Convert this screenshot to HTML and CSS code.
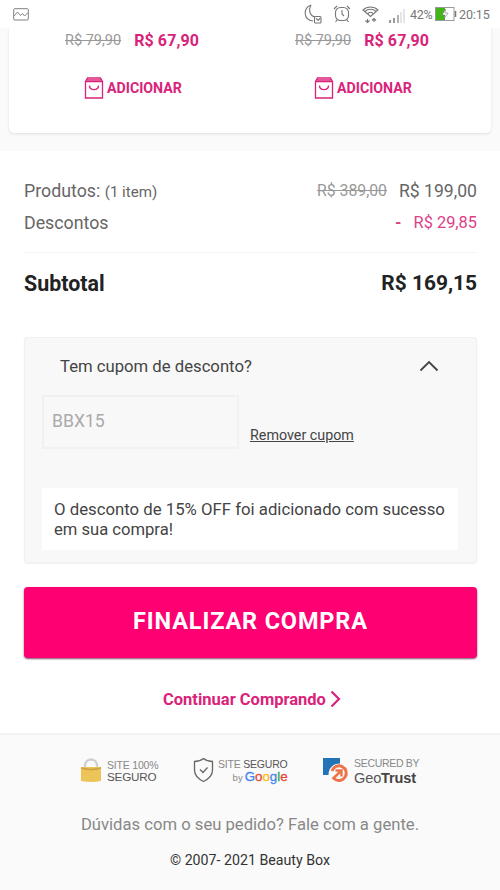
FILE: index.html
```html
<!DOCTYPE html>
<html lang="pt-BR">
<head>
<meta charset="utf-8">
<title>Beauty Box</title>
<link rel="stylesheet" href="styles.css">
</head>
<body>
<header class="status">
  <svg class="status-photo" width="16" height="13" viewBox="0 0 16 13" fill="none" stroke="#808080"><rect x=".7" y=".7" width="14.6" height="11.3" rx="1"/><path d="M1 8l3.500-4 3 3.500 2-2 2 2.500 3.500-3.500"/></svg>
  <svg class="status-icons" width="102" height="22" viewBox="0 0 102 22" fill="none" stroke="#777" stroke-width="1.100">
    <path d="M8 2C0 5 0 17 10 18M8 2C5 7 7 13 12 14"/><rect x="11.500" y="13.500" width="6.500" height="6.500" rx="1"/><path d="M13 15.500l2.500 2M17 15l-1.500 2.500"/>
    <rect x="32.500" y="4.500" width="13" height="13" rx="5"/><path d="M31 6l3-3M47 6l-3-3M34.500 16.500l-2 2.500M43.500 16.500l2 2.500M39 7v4l2 2"/>
    <path d="M60 7c4-4 11-4 15 0l-7.500 6.500zM62 8.500c3-3 8-3 11 0M65 10.500c1.500-1.500 3.500-1.500 5 0"/><path d="M64.500 16v3.500M62.500 17.500l2 2 2-2M71 19v-3.500M69 17.500l2-2 2 2"/>
    <path d="M87 20v-3M91 20v-5" stroke-width="1.500"/><path d="M95 20v-8" stroke="#999" stroke-width="1.500"/><path d="M98 20V9M101 20V6" stroke="#ddd" stroke-width="1.500"/>
  </svg>
  <span class="battery-text">42%</span>
  <svg class="battery" width="22" height="14" viewBox="0 0 22 14"><rect x=".5" y=".5" width="18.500" height="13" fill="#fff" stroke="#999"/><path d="M1 1h9v12H1z" fill="#43b514"/><path d="M20.500 4v6" stroke="#777" stroke-width="1.500"/><path d="M10.500 2L7 8h3l-1 4 4-6h-3z" fill="#fff" stroke="#666" stroke-width=".5"/></svg>
  <span class="clock">20:15</span>
</header>
<section class="offers">
  <div class="offers-card">
    <div class="offer">
      <div class="offer-price"><s>R$ 79,90</s><b>R$ 67,90</b></div>
      <a class="add"><svg width="20" height="22" viewBox="0 0 20 22" fill="none" stroke="#d9237a" stroke-width="1.300"><path d="M1.500 4.500h17V21h-17zM1.500 4.500L3.500 1h13l2 3.500M3 2.800h14"/><path d="M5.500 8.500c0 5.500 9 5.500 9 0"/></svg><span>ADICIONAR</span></a>
    </div>
    <div class="offer">
      <div class="offer-price"><s>R$ 79,90</s><b>R$ 67,90</b></div>
      <a class="add"><svg width="20" height="22" viewBox="0 0 20 22" fill="none" stroke="#d9237a" stroke-width="1.300"><path d="M1.500 4.500h17V21h-17zM1.500 4.500L3.500 1h13l2 3.500M3 2.800h14"/><path d="M5.500 8.500c0 5.500 9 5.500 9 0"/></svg><span>ADICIONAR</span></a>
    </div>
  </div>
</section>
<main class="checkout">
  <div class="row products"><span>Produtos: <small>(1 item)</small></span><span class="values"><s>R$ 389,00</s><span>R$ 199,00</span></span></div>
  <div class="row discounts"><span>Descontos</span><span class="discount"><b>-</b><span>R$ 29,85</span></span></div>
  <div class="row subtotal"><span>Subtotal</span><span class="total">R$ 169,15</span></div>
  <section class="coupon">
    <div class="coupon-head"><span>Tem cupom de desconto?</span><svg width="20" height="12" viewBox="0 0 20 12" fill="none" stroke="#444" stroke-width="1.800"><path d="M1.500 10.500L10 2l8.500 8.500"/></svg></div>
    <div class="coupon-form"><div class="coupon-input">BBX15</div><a class="remove">Remover cupom</a></div>
    <p class="message"><span class="line">O desconto de 15% OFF foi adicionado com sucesso</span> <span class="line last">em sua compra!</span></p>
  </section>
  <button class="finish">FINALIZAR COMPRA</button>
  <a class="continue"><span>Continuar Comprando</span><svg width="11" height="18" viewBox="0 0 11 18" fill="none" stroke="#d9237a" stroke-width="2.200"><path d="M1.500 1.500L9 9l-7.500 7.500"/></svg></a>
</main>
<footer class="footer">
  <div class="seals">
    <div class="seal site">
      <svg width="22" height="26" viewBox="0 0 22 26"><path d="M5 12V8.500c0-8 12-8 12 0V12" fill="none" stroke="#cfcfcf" stroke-width="2.300"/><path d="M1 10h20v14q-10 2-20 0z" fill="#edc458"/><path d="M1 11q10 3 20 0" fill="none" stroke="#cfa044" stroke-width="1.600"/></svg>
      <div class="seal-text"><span>SITE 100%</span><span class="strong">SEGURO</span></div>
    </div>
    <div class="seal google">
      <svg width="21" height="26" viewBox="0 0 21 26" fill="none" stroke="#666" stroke-width="1.300"><path d="M10.500 1.500C8 3.500 5 4.500 1.500 4.500V13c0 6 4 9 9 11.500 5-2.500 9-5.500 9-11.500V4.500c-3.500 0-6.500-1-9-3z"/><path d="M7 12.500l3 3 4.500-5"/></svg>
      <div class="seal-text"><span>SITE <span class="strong">SEGURO</span></span><span class="brand"><small>by</small><b class="blue">G</b><b class="red">o</b><b class="yellow">o</b><b class="blue">g</b><b class="green">l</b><b class="red">e</b></span></div>
    </div>
    <div class="seal trust">
      <svg width="27" height="26" viewBox="0 0 27 26"><path d="M1 1h17v5.500C11 6.500 6.500 11 6.500 18H1z" fill="#2274b5"/><path d="M10 14a7.300 7.300 0 1 1 2 7.500" fill="none" stroke="#ec7448" stroke-width="3"/><path d="M10.500 22l8-7.500M13.500 13.500h6v6" fill="none" stroke="#ec7448" stroke-width="2.400"/></svg>
      <div class="seal-text"><span>SECURED BY</span><span class="geo">Geo<b>Trust</b></span></div>
    </div>
  </div>
  <p class="help">Dúvidas com o seu pedido? Fale com a gente.</p>
  <p class="copyright">© 2007- 2021 Beauty Box</p>
</footer>
</body>
</html>
```
FILE: styles.css
```css
* { box-sizing: border-box; }
body { margin: 0; width: 500px; height: 890px; overflow: hidden; background: #fff; color: #666; font-family: Roboto, sans-serif; white-space: nowrap; }
svg { display: block; flex: none; }
p { margin: 0; }
.status { display: flex; align-items: center; height: 28px; padding: 0 9px 0 13px; font-size: 12.5px; color: #777; }
.status-icons { margin-left: auto; }
.battery-text { margin-left: 5px; width: 24px; letter-spacing: -.3px; }
.battery { margin: 0 2px 0 1px; }
.clock { width: 32px; letter-spacing: -.1px; }
.offers { height: 123px; padding: 0 9px; background: #fafafa; }
.offers-card { display: flex; height: 105px; background: #fff; border-radius: 0 0 5px 5px; box-shadow: 0 1px 3px rgba(0,0,0,.11); clip-path: inset(0 -5px -6px); }
.offer { width: 230px; display: flex; flex-direction: column; padding-left: 56px; }
.offer-price { display: flex; align-items: center; height: 24px; gap: 13px; font-size: 16px; color: #d9237a; }
.offer-price b { font-weight: 700; letter-spacing: .1px; }
.offer-price s { font-size: 14.5px; color: #999; }
.add { display: flex; align-items: center; gap: 3px; margin: 25px 0 0 19px; height: 22px; color: #d9237a; font-size: 14.2px; font-weight: 700; }
.checkout { height: 582px; padding: 24px 23px 0 24px; }
.row { display: flex; justify-content: space-between; align-items: center; font-size: 17.8px; }
.products, .discounts { height: 32px; padding-bottom: 1px; }
.row small { font-size: 15.1px; }
.values, .discount { display: flex; align-items: center; }
.values { font-size: 17.6px; gap: 12px; }
.values s { font-size: 15.8px; color: #999; }
.discount { gap: 12px; color: #dc3f87; font-size: 16.4px; }
.subtotal { height: 62px; margin-top: 13px; padding-bottom: 1px; border-top: 1px solid #f3f3f3; font-size: 21.4px; font-weight: 700; color: #222; }
.total { font-size: 20.9px; }
.coupon { height: 226px; margin-top: 23px; padding: 0 18px 0 17px; border: 1px solid #f0f0f0; border-radius: 3px; background: #f8f8f8; box-shadow: 0 1px 2px rgba(0,0,0,.06); color: #444; }
.coupon-head { display: flex; justify-content: space-between; align-items: center; height: 57px; padding: 0 19px 1px 18px; font-size: 16.7px; }
.coupon-form { display: flex; height: 54px; gap: 11px; }
.coupon-input { width: 197px; border: 2px solid #f1f1f1; padding-left: 8px; line-height: 49px; font-size: 17.6px; color: #aaa; }
.remove { margin-top: 31px; font-size: 14.3px; line-height: 18px; text-decoration: underline; }
.message { height: 62px; margin-top: 39px; padding: 12px 12px 0; background: #fff; font-size: 16.75px; line-height: 19.5px; }
.line { display: block; }
.last { font-size: 16.6px; }
.finish { display: block; width: 100%; height: 71px; margin-top: 24px; padding: 0 0 3px; border: 0; border-radius: 4px; background: #ff0073; color: #fff; box-shadow: 0 1px 2px rgba(80,0,40,.7); font: 700 23.5px Roboto, sans-serif; letter-spacing: .85px; }
.continue { display: flex; align-items: center; gap: 4px; height: 22px; margin: 30px 0 0 139px; font-size: 16.5px; font-weight: 700; color: #d9237a; }
.footer { height: 157px; background: #fafafa; border-top: 2px solid #f3f3f3; text-align: center; }
.seals { display: flex; height: 71px; padding: 22px 0 0 80px; }
.seal { display: flex; text-align: left; }
.seal-text { display: flex; flex-direction: column; font-family: "Liberation Sans", sans-serif; font-size: 10.5px; line-height: 12px; color: #888; }
.site { gap: 5px; width: 113px; }
.site .seal-text { padding-top: 2px; letter-spacing: -.2px; }
.site .strong { font-size: 11.7px; }
.google { gap: 4px; width: 129px; }
.google .seal-text { padding-top: 1px; letter-spacing: -.2px; }
.strong { color: #555; }
.brand { display: flex; align-items: baseline; justify-content: flex-end; font-size: 13.3px; line-height: 13px; letter-spacing: 0; }
.brand small { margin-right: 2px; font-size: 9.5px; }
.brand b { font-weight: 400; -webkit-text-stroke: .3px; }
.blue { color: #4285f4; } .red { color: #ea4335; } .yellow { color: #fbbc05; } .green { color: #34a853; }
.trust { gap: 5px; }
.trust .seal-text { letter-spacing: -.3px; }
.geo { font-size: 14.5px; line-height: 18px; letter-spacing: -.1px; color: #555; }
.geo b { color: #444; }
.help { height: 36px; line-height: 37px; font-size: 16.65px; color: #888; }
.copyright { height: 36px; line-height: 36px; font-size: 14.2px; color: #333; }
```
